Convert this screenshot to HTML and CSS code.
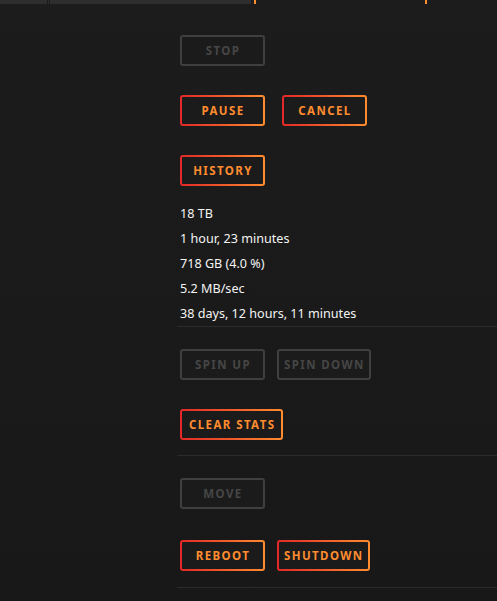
FILE: index.html
```html
<!DOCTYPE html>
<html lang="en">

<head>
    <meta charset="UTF-8">
    <title>Array Operation</title>
    <link rel="stylesheet" href="styles.css">
</head>

<body>
    <div class="tabstrip">
        <div class="tab tab-small"></div>
        <div class="tab tab-thin"></div>
        <div class="tab tab-wide"></div>
        <div class="tick tick-first"></div>
        <div class="tick tick-second"></div>
    </div>

    <div class="panel">
        <div class="block">
            <div class="row"><button class="btn off">Stop</button></div>
            <div class="row">
                <button class="btn">Pause</button>
                <button class="btn gap-wide">Cancel</button>
            </div>
            <div class="row"><button class="btn">History</button></div>
            <div class="info">
                <div>18 TB</div>
                <div>1 hour, 23 minutes</div>
                <div>718 GB (4.0 %)</div>
                <div>5.2 MB/sec</div>
                <div>38 days, 12 hours, 11 minutes</div>
            </div>
        </div>

        <div class="block">
            <div class="row">
                <button class="btn off">Spin Up</button>
                <button class="btn off">Spin Down</button>
            </div>
            <div class="row last"><button class="btn wide">Clear Stats</button></div>
        </div>

        <div class="block">
            <div class="row move"><button class="btn off">Move</button></div>
            <div class="row last end"><button class="btn">Reboot</button><button class="btn">Shutdown</button></div>
        </div>
    </div>
</body>

</html>
```

FILE: styles.css
```css
body {
    margin: 0;
    height: 601px;
    overflow: hidden;
    background: linear-gradient(#1c1c1c, #181818);
    font-family: "Noto Sans", "Open Sans", sans-serif;
    color: #f4f4f4;
}

.tabstrip {
    position: relative;
    display: flex;
    height: 4px;
}

.tab {
    background-color: #2e2e2e;
    height: 4px;
}

.tab-small {
    width: 47px;
}

.tab-thin {
    width: 1px;
    margin-left: 1px;
}

.tab-wide {
    width: 201px;
    margin-left: 1px;
}

.tick {
    position: absolute;
    top: 0;
    width: 2px;
    height: 4px;
    background-color: #ff8c2f;
}

.tick-first {
    left: 254px;
}

.tick-second {
    left: 425px;
}

.panel {
    margin-left: 177px;
}

.block {
    padding-left: 3px;
    border-bottom: 1px solid #2b2b2b;
}

.block:first-child {
    padding-top: 31px;
}

.block + .block {
    padding-top: 22px;
}

.row {
    display: flex;
    height: 31px;
    margin-bottom: 29px;
}

.row.last {
    margin-bottom: 15px;
}

.row.end {
    margin-bottom: 16px;
}

.row.move {
    margin-bottom: 31px;
}

.btn {
    box-sizing: border-box;
    min-width: 85px;
    height: 31px;
    margin: 0 12px 0 0;
    padding: 0 4px 0 5px;
    border: 2px solid transparent;
    border-radius: 3px;
    background: linear-gradient(#1b1b1b, #1b1b1b) padding-box,
        linear-gradient(90deg, #e22828, #ff8c2f) border-box;
    color: #ff8c2f;
    font-family: "Noto Sans", "Open Sans", sans-serif;
    font-size: 11.5px;
    font-weight: bold;
    letter-spacing: 1.4px;
    text-transform: uppercase;
}

.btn.wide {
    padding: 0 6px 0 7px;
}

.btn.gap-wide {
    margin-left: 5px;
}

.btn.off {
    background: #1b1b1b;
    border-color: #3f3f3f;
    color: #464646;
}

.info {
    margin-top: -14px;
    font-size: 12.6px;
    line-height: 25px;
}
```
